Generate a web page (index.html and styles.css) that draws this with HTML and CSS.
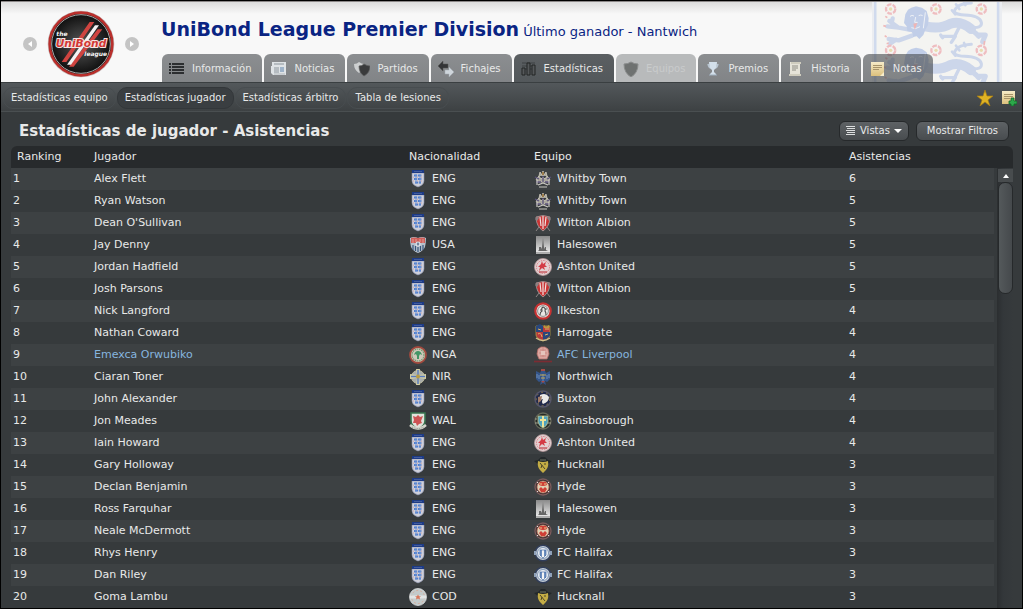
FILE: index.html
```html
<!DOCTYPE html>
<html lang="es">

<head>
    <meta charset="UTF-8">
    <meta name="viewport" content="width=device-width, initial-scale=1.0">
    <title>UniBond League Premier Division</title>
    <link rel="stylesheet" href="styles.css">
</head>

<body>
    <!-- iconos compartidos -->
    <svg class="defs" aria-hidden="true">
        <defs>
            <linearGradient id="paper" x1="0" y1="0" x2="0" y2="1">
                <stop offset="0" stop-color="#f6ebc8" />
                <stop offset="1" stop-color="#dcc07c" />
            </linearGradient>
            <linearGradient id="sky" x1="0" y1="0" x2="0" y2="1">
                <stop offset="0" stop-color="#8a8a8a" />
                <stop offset="1" stop-color="#f2f2f2" />
            </linearGradient>
            <radialGradient id="disc">
                <stop offset="0" stop-color="#585858" />
                <stop offset="1" stop-color="#0c0c0c" />
            </radialGradient>
        </defs>

        <symbol id="eng" viewBox="0 0 18 18">
            <path d="M3 3h12v8q0 4-6 6-6-2-6-6z" fill="#cfd0da" stroke="#8992ad" stroke-width=".6" />
            <path d="M3 0h12v3H3z" fill="#1d3b87" />
            <path d="M5 1.500h8" stroke="#5c73ad" stroke-width=".6" />
            <path d="M5 5.500h8M5 9h8M6 12.500h6" stroke="#4f7ccb" stroke-width="2" stroke-dasharray="3 .8" />
            <path d="M7 4v10M11 4v10" stroke="#7396d6" stroke-width="1" />
            <path d="M4 7.200h10M4 11h10" stroke="#cf9a9c" stroke-width=".8" stroke-dasharray="1 3" />
        </symbol>
        <symbol id="usa" viewBox="0 0 18 18">
            <path d="M1 2q4-2 8 0 4-2 8 0 0 5-1 9-2 4-7 6-5-2-7-6Q1 7 1 2z" fill="#b5bfcb" />
            <path d="M2 2q4-1 7 0 4-1 7 0v5H2z" fill="#cf5f59" />
            <path d="M4 3v4M7 3v3M11 3v3M14 3v4" stroke="#e9b5b0" stroke-width=".7" />
            <path d="M4 9v5M6.500 10v5M9 11v5M11.500 10v5M14 9v5" stroke="#36557b" stroke-width="1.200" />
            <circle cx="9" cy="8" r="2.500" fill="#dfe5eb" />
            <path d="M9 6l1.500 2-1.500 2-1.500-2z" fill="#6f8199" />
        </symbol>
        <symbol id="nga" viewBox="0 0 18 18">
            <circle cx="9" cy="9" r="8" fill="#cfc9bb" stroke="#a34a3e" stroke-width="1.800" />
            <circle cx="9" cy="9" r="6" fill="none" stroke="#75976f" stroke-width="1.200" stroke-dasharray="1.500 .7" />
            <path d="M5 9q1-4 4-4t4 4l-2-1-1 2v3H8v-3L7 8z" fill="#439565" />
        </symbol>
        <symbol id="nir" viewBox="0 0 18 18">
            <circle cx="9" cy="9" r="6.500" fill="#a9adab" stroke="#c5c2a5" stroke-width="1" />
            <path d="M7 1h4l-1 6 7-1v5l-7-1 1 7H7l1-7-7 1V6l7 1z" fill="#d3cfa5" />
            <path d="M9 2v14M2 8.500h14" stroke="#577bc0" stroke-width="1.500" />
            <circle cx="9" cy="8.500" r="2" fill="#b99d43" />
        </symbol>
        <symbol id="wal" viewBox="0 0 18 18">
            <path d="M2 1h14v8q0 5-7 8-7-3-7-8z" fill="#e1e2db" stroke="#39744f" stroke-width="1.600" />
            <path d="M4 4l3 1 2-2 2 2 3-1-2 5 1 2-3 1-2 2-1-3-3 0 1-3z" fill="#cc5353" />
            <path d="M1 13q8 7 16 0" fill="none" stroke="#d6d6ce" stroke-width="2.400" />
            <path d="M3 15q6 3 12 0" fill="none" stroke="#6d7c70" stroke-width=".7" stroke-dasharray="1 .8" />
        </symbol>
        <symbol id="cod" viewBox="0 0 18 18">
            <circle cx="9" cy="9" r="8.500" fill="#c3caca" stroke="#dddddd" stroke-width=".8" />
            <circle cx="9" cy="9" r="6.500" fill="none" stroke="#d9a490" stroke-width=".8" stroke-dasharray="2 2" />
            <path d="M1 9h16" stroke="#e1e5e5" stroke-width="3" />
            <path d="M9 6.500l1 1.700h2l-1.500 1.300.5 2L9 10.500l-2 1 .5-2L6 8.200h2z" fill="#d8775b" />
        </symbol>

        <symbol id="whitby" viewBox="0 0 18 18">
            <path d="M5 6l1-4 2 3 1-4 1 4 2-3 1 4M2 9l3-3 2 3 2-2 2 2 2-3 3 3-2 3H4z" fill="#aaa79d" stroke="#d3cec0" stroke-width=".8" />
            <path d="M1 7l4 2M17 7l-4 2M2 12l5 0M11 12h5M9 6v6" stroke="#5a527b" stroke-width="1.300" />
            <path d="M4 15l5-2 5 2M5 17h8M3 10v5M15 10v5" stroke="#c9c7c2" stroke-width="1.200" fill="none" />
            <path d="M8 2h2v3H8z" fill="#9b7b4a" />
        </symbol>
        <symbol id="witton" viewBox="0 0 18 18">
            <path d="M2 3q7-3 14 0 0 9-7 14Q2 12 2 3z" fill="#c93434" stroke="#aaa2a2" stroke-width=".8" />
            <path d="M6 3l1 9M12 3l-1 9M9 2v13" stroke="#eee0df" stroke-width="1.200" />
            <path d="M2 17L5 13M16 17l-3-4" stroke="#8d8585" stroke-width="1" />
            <path d="M1 5l3-3 1 2-2 3zM17 5l-3-3-1 2 2 3z" fill="#8a8182" />
        </symbol>
        <symbol id="halesowen" viewBox="0 0 18 18">
            <path d="M2 0h14v18H2z" fill="url(#sky)" />
            <path d="M4 15l1-1v-3h2v2l1-2 1-9 1 9 1 2v-2h1v3l2 1z" fill="#666" />
            <path d="M2 17h14" stroke="#999" stroke-width="1.500" />
        </symbol>
        <symbol id="ashton" viewBox="0 0 18 18">
            <circle cx="9" cy="9" r="8.500" fill="#e3d1d2" stroke="#b99a9c" stroke-width=".8" />
            <circle cx="9" cy="9" r="6.500" fill="none" stroke="#d46a70" stroke-width=".8" stroke-dasharray="1.500 1" />
            <path d="M8 3l1 3 3-2-1 3 2 2-3 0 1 3-3-2-3 3 1-4-2 0 3-3z" fill="#d43b45" />
            <path d="M5 14h8" stroke="#c34b53" stroke-width="1.300" />
        </symbol>
        <symbol id="ilkeston" viewBox="0 0 18 18">
            <circle cx="9" cy="9" r="7.700" fill="#e9e6e4" stroke="#c83232" stroke-width="2.200" />
            <circle cx="9" cy="9" r="5.400" fill="none" stroke="#777" stroke-width=".8" />
            <path d="M6 13q0-3 2-4-1-3 1-4 3 1 2 4 1 1 1 4M6 8h2M11 7h2" stroke="#4c4c4c" stroke-width="1.100" fill="none" />
        </symbol>
        <symbol id="harrogate" viewBox="0 0 18 18">
            <path d="M2 2h14v9q0 3-7 6-7-3-7-6z" fill="#b7393c" stroke="#b39c45" stroke-width=".8" />
            <path d="M2 2l4-2 3 2v6H2zM9 8h7v4q-3 3-7 4z" fill="#29477c" />
            <path d="M10 1l2 2 3-2v3h-5z" fill="#b99a3c" />
            <path d="M4 10q3-2 4 3M11 5h4M4 5l3 1M11 11l3-1" stroke="#ddb267" stroke-width="1" fill="none" />
            <path d="M2 14q7 5 14 0" stroke="#d3bf8a" stroke-width="1.300" fill="none" />
        </symbol>
        <symbol id="liverpool" viewBox="0 0 18 18">
            <path d="M4 3l3-2h4l3 2 1 5-2 5H5L3 8z" fill="#dba6a0" stroke="#b76e69" stroke-width=".8" />
            <path d="M6 4h6M5 7h8M6 10h6M9 2v9" stroke="#c98780" stroke-width=".9" />
            <path d="M7 5h4v4H7z" fill="#e5c4bc" />
            <path d="M0 15.500h18" stroke="#7b2c33" stroke-width="1.700" />
        </symbol>
        <symbol id="northwich" viewBox="0 0 18 18">
            <path d="M2 3l4 2 1-2q2-2 4 0l1 2 4-2v8l-3 3-2-1 1 4-3-2-3 2 1-4-2 1-3-3z" fill="#34558a" />
            <path d="M3 6v4M5 7v4M13 7v4M15 6v4M9 6v7" stroke="#7f9cc4" stroke-width=".8" />
            <path d="M7 1h4v2H7zM7 13l2 2 2-2" fill="#a34b46" />
            <path d="M6 7h6M7 10h4" stroke="#c4a850" stroke-width="1" />
        </symbol>
        <symbol id="buxton" viewBox="0 0 18 18">
            <circle cx="9" cy="9" r="8" fill="#20294a" stroke="#55566a" stroke-width="1.500" />
            <circle cx="9" cy="9" r="6.800" fill="none" stroke="#a58c49" stroke-width=".8" stroke-dasharray="2 3" />
            <path d="M6 5q6-3 9 2 0 5-6 7-2-2 0-5l-3 1z" fill="#ebeae8" />
            <path d="M4 7l4-1-1 5-3 2z" fill="#9f7965" />
        </symbol>
        <symbol id="gainsborough" viewBox="0 0 18 18">
            <circle cx="9" cy="9" r="8" fill="#252b28" stroke="#67695a" stroke-width="1.300" />
            <path d="M4 4h10v6q-1 4-5 6-4-2-5-6z" fill="#4fa4c0" stroke="#c9c58a" stroke-width=".8" />
            <path d="M9 4v11M6 8h6" stroke="#ebe39a" stroke-width="2" />
            <path d="M1 7h2M1 11h3M15 7h2M14 11h3" stroke="#a4a490" stroke-width="1" />
        </symbol>
        <symbol id="hucknall" viewBox="0 0 18 18">
            <path d="M0 5l4-1 3-3h4l3 3 4 1-4 3H4z" fill="#23282a" />
            <path d="M4 5q5 2 10 0 1 6-2 9l-3 3-3-3q-3-3-2-9z" fill="#c4ad45" />
            <path d="M6 7l5 6M7 12l1-3M11 7v2" stroke="#4d4729" stroke-width="1" />
            <path d="M6 4h6" stroke="#707460" stroke-width="1" />
        </symbol>
        <symbol id="hyde" viewBox="0 0 18 18">
            <circle cx="9" cy="9" r="8" fill="#363032" stroke="#7d5c5d" stroke-width="1.300" />
            <circle cx="9" cy="9" r="6" fill="#ded1b4" stroke="#bd6a57" stroke-width=".8" />
            <path d="M6 4h6l1 3q-4 2-8 0zM5 11l2-2 2 2 2-2 2 2-2 3H7z" fill="#cf3f35" />
            <path d="M7 5v2M11 5v2" stroke="#e9cb8c" stroke-width="1" />
            <path d="M3 4l1 1M15 4l-1 1M3 14l1-1M15 14l-1-1" stroke="#ddd" stroke-width="1" />
        </symbol>
        <symbol id="halifax" viewBox="0 0 18 18">
            <circle cx="9" cy="9" r="7.800" fill="#c3ccd6" stroke="#303d5a" stroke-width="1.600" />
            <circle cx="9" cy="9" r="5.500" fill="#edf1f4" stroke="#8196b4" stroke-width="1" />
            <path d="M6 6h6v5l-3 3-3-3z" fill="#f5f5f5" stroke="#5e7fb0" stroke-width=".8" />
            <path d="M7 6v6M11 6v6" stroke="#426dac" stroke-width="1.500" />
            <path d="M0 7h2v4H0zM16 7h2v4h-2z" fill="#8fa1b9" />
        </symbol>

        <!-- un león con sus rosas, se repite en vertical -->
        <symbol id="lion" viewBox="0 0 390 124" overflow="visible">
            <g fill="none" stroke="#ccd6ea" stroke-linecap="round" stroke-linejoin="round">
                <path d="M160 76q45 10 75-8 32-10 62 16" stroke-width="30" />
                <path d="M290 86q18 4 30 20M318 102h22l-8 20" stroke-width="15" />
                <path d="M262 78l-14 28-40 0M250 106l-12 18M212 110l-6-8" stroke-width="10" />
                <path d="M112 86L80 80l-28-20M80 80l-34-4M60 62l2-10" stroke-width="13" />
                <path d="M120 104l-40 14-30-4M72 116l-18 12" stroke-width="13" />
                <path d="M292 78q40 6 36-14t-50-22q-42-2-26-20 8-14 46-16" stroke-width="9" />
                <path d="M250 40l-10-12M262 24l-10-14M280 12l-4-10" stroke-width="8" />
            </g>
            <path d="M100 40l8-14 10-6 14-4 18 4 14 10 6 22-2 20-8 14-6 16-12 12-8-8-10 2-4-14-14-4-2-14-8-10z" fill="#c1cee8" />
            <path d="M114 46q6-5 12-1M140 44q7-4 12 0M131 48l-3 16 9 0M118 80q12 7 26-3M160 34l-6 48" fill="none" stroke="#eef1f6" stroke-width="3" />
            <path d="M124 68l12-2-8 20z" fill="#f0b5b4" />
            <path d="M40 46l6 4M34 74l8 2M38 104l6 4M44 128l6-2M338 120l-2 12" stroke="#efb9b9" stroke-width="5" />
            <g fill="none" stroke="#efbdc0" stroke-width="7">
                <circle cx="56" cy="24" r="14" stroke-dasharray="14 3.600" />
                <circle cx="192" cy="24" r="14" stroke-dasharray="14 3.600" />
                <circle cx="328" cy="24" r="14" stroke-dasharray="14 3.600" />
            </g>
            <g fill="#e9ddb0">
                <circle cx="56" cy="24" r="5" />
                <circle cx="192" cy="24" r="5" />
                <circle cx="328" cy="24" r="5" />
            </g>
        </symbol>
    </svg>

    <div class="window">
        <header class="top">
            <svg class="crest" viewBox="0 0 390 243" aria-hidden="true">
                <path d="M0 0h390v243H0z" fill="#ebedf1" />
                <path d="M6 0h7v243H6zM375 0h7v243h-7z" fill="#d0daed" />
                <path d="M15 0h358v243H15z" fill="#f4f4f1" />
                <use href="#lion" width="390" height="124" y="-3" />
                <use href="#lion" width="390" height="124" y="121" />
            </svg>

            <div class="club">
                <button class="arrow" aria-label="Anterior">
                    <svg viewBox="0 0 14 14"><path d="M9 4v6L5 7z" fill="#fff" /></svg>
                </button>
                <svg class="logo" viewBox="0 0 204 204" role="img" aria-label="The UniBond League">
                    <circle cx="102" cy="102" r="100" fill="#c9c4c4" />
                    <circle cx="102" cy="102" r="94" fill="url(#disc)" stroke="#b92f2c" stroke-width="8" />
                    <circle cx="102" cy="102" r="88" fill="none" stroke="#a9a9a9" stroke-width="3" />
                    <path d="M128 36h14L58 156H44zM152 58h14L80 170H66z" fill="#d04440" />
                    <path d="M144 46h12L72 164H60z" fill="#f4f4f4" />
                    <text x="28" y="77" class="logo-small">the</text>
                    <text x="102" y="112" class="logo-big">UniBond</text>
                    <text x="112" y="138" class="logo-small">league</text>
                </svg>
                <button class="arrow" aria-label="Siguiente">
                    <svg viewBox="0 0 14 14"><path d="M5 4v6l4-3z" fill="#fff" /></svg>
                </button>
            </div>

            <div class="heading">
                <div class="titles">
                    <h1>UniBond League Premier Division</h1>
                    <p>Último ganador - Nantwich</p>
                </div>
                <nav class="tabs">
                    <a href="#">
                        <svg viewBox="0 0 16 16"><path d="M0 2h2v2H0zM0 5h2v2H0zM0 8h2v2H0zM0 11h2v2H0zM3 2h12v2H3zM3 5h12v2H3zM3 8h12v2H3zM3 11h12v2H3z" fill="#2c2e30" /></svg>
                        Información
                    </a>
                    <a href="#">
                        <svg viewBox="0 0 16 16"><path d="M1 1h14v13H2l-2-2V5h1z" fill="#dfe3e6" /><path d="M3 3h10M3 7h5M3 9h5M3 11h5" stroke="#8b949b" /><path d="M9 6h4v5H9z" fill="#9eb3c9" /><path d="M3 13h11" stroke="#b5babd" /></svg>
                        Noticias
                    </a>
                    <a href="#">
                        <svg viewBox="0 0 16 16"><path d="M0 3q3 0 5-2 3 2 5 2 0 6-5 9Q0 9 0 3z" fill="#cdcfd0" /><path d="M5 5q3 0 5-2 3 2 6 2 0 7-6 10Q5 12 5 5z" fill="#3a3b3c" stroke="#5d5e5f" stroke-width=".7" /></svg>
                        Partidos
                    </a>
                    <a href="#">
                        <svg viewBox="0 0 16 16"><path d="M0 5l5-5v3h5v4H5v3z" fill="#333436" stroke="#555" stroke-width=".5" /><path d="M16 11l-5-5v3H7v4h4v3z" fill="#cfd6dc" stroke="#a3abb1" stroke-width=".5" /></svg>
                        Fichajes
                    </a>
                    <a href="#" class="active">
                        <svg viewBox="0 0 16 16"><path d="M1 2h13M1 5h13M1 8h13" stroke="#3d4043" /><path d="M1 7h3v7H1zM6 2h3v12H6zM11 4h3v10h-3z" fill="#55585a" stroke="#222425" /></svg>
                        Estadísticas
                    </a>
                    <a href="#" class="disabled" aria-disabled="true">
                        <svg viewBox="0 0 16 16"><path d="M1 3q4 0 7-2 3 2 7 2 0 9-7 13Q1 12 1 3z" fill="#6f7271" stroke="#8a8c8c" /></svg>
                        Equipos
                    </a>
                    <a href="#">
                        <svg viewBox="0 0 16 16"><path d="M3 3q1 4 3 4M13 3q-1 4-3 4" fill="none" stroke="#b9c6d2" stroke-width="1.500" /><path d="M4 1h8q0 6-3 8v2l2 2v1H5v-1l2-2V9Q4 7 4 1z" fill="#d3dfea" /><path d="M4 14h8" stroke="#9fb0bf" /></svg>
                        Premios
                    </a>
                    <a href="#">
                        <svg viewBox="0 0 16 16"><path d="M2 1h11v2h-1v10h1v2H1v-2h1z" fill="#e5e3d8" /><path d="M4 5h6M4 7h6M4 9h4" stroke="#8e8d84" /><path d="M1 14h12M3 2h10" stroke="#b9b6a4" /></svg>
                        Historia
                    </a>
                    <a href="#">
                        <svg viewBox="0 0 16 16"><path d="M1 1h13v14H1z" fill="url(#paper)" /><path d="M3 4.500h9M3 6.500h9M3 8.500h6" stroke="#a8946a" /><path d="M14 15v-4l-4 4z" fill="#f8edcc" /></svg>
                        Notas
                    </a>
                </nav>
            </div>
        </header>

        <div class="subnav">
            <nav class="pills">
                <a href="#">Estadísticas equipo</a>
                <a href="#" class="active">Estadísticas jugador</a>
                <a href="#">Estadísticas árbitro</a>
                <a href="#">Tabla de lesiones</a>
            </nav>
            <button class="tool" aria-label="Favorito">
                <svg viewBox="0 0 16 16"><path d="M8 0l2 6h6l-5 4 2 6-5-4-5 4 2-6-5-4h6z" fill="#e0b323" stroke="#a87d12" stroke-width=".7" /></svg>
            </button>
            <button class="tool" aria-label="Añadir nota">
                <svg viewBox="0 0 16 16"><path d="M1 1h13v13H1z" fill="url(#paper)" /><path d="M3 4.500h9M3 6.500h9M3 8.500h6" stroke="#a8946a" /><path d="M10 8h3v3h3v3h-3v2h-3v-2H8v-3h2z" fill="#2ca84a" stroke="#11642a" stroke-width=".8" /></svg>
            </button>
        </div>

        <main>
            <div class="bar">
                <h2>Estadísticas de jugador - Asistencias</h2>
                <button class="btn">
                    <svg class="lines" viewBox="0 0 10 10"><path d="M0 .500h9M1 2.500h8M0 4.500h9M1 6.500h8M0 8.500h9" stroke="#dcdedf" /></svg>
                    Vistas
                    <svg class="caret" viewBox="0 0 8 4"><path d="M0 0h8L4 4z" fill="#fff" /></svg>
                </button>
                <button class="btn">Mostrar Filtros</button>
            </div>

            <div class="list">
                <table>
                    <colgroup>
                        <col class="c-rank">
                        <col>
                        <col class="c-nat">
                        <col>
                        <col class="c-num">
                    </colgroup>
                    <thead>
                        <tr><th>Ranking</th><th>Jugador</th><th>Nacionalidad</th><th>Equipo</th><th>Asistencias</th></tr>
                    </thead>
                    <tbody>
                        <tr><td>1</td><td>Alex Flett</td><td><svg><use href="#eng" /></svg>ENG</td><td><svg><use href="#whitby" /></svg>Whitby Town</td><td>6</td></tr>
                        <tr><td>2</td><td>Ryan Watson</td><td><svg><use href="#eng" /></svg>ENG</td><td><svg><use href="#whitby" /></svg>Whitby Town</td><td>5</td></tr>
                        <tr><td>3</td><td>Dean O'Sullivan</td><td><svg><use href="#eng" /></svg>ENG</td><td><svg><use href="#witton" /></svg>Witton Albion</td><td>5</td></tr>
                        <tr><td>4</td><td>Jay Denny</td><td><svg><use href="#usa" /></svg>USA</td><td><svg><use href="#halesowen" /></svg>Halesowen</td><td>5</td></tr>
                        <tr><td>5</td><td>Jordan Hadfield</td><td><svg><use href="#eng" /></svg>ENG</td><td><svg><use href="#ashton" /></svg>Ashton United</td><td>5</td></tr>
                        <tr><td>6</td><td>Josh Parsons</td><td><svg><use href="#eng" /></svg>ENG</td><td><svg><use href="#witton" /></svg>Witton Albion</td><td>5</td></tr>
                        <tr><td>7</td><td>Nick Langford</td><td><svg><use href="#eng" /></svg>ENG</td><td><svg><use href="#ilkeston" /></svg>Ilkeston</td><td>4</td></tr>
                        <tr><td>8</td><td>Nathan Coward</td><td><svg><use href="#eng" /></svg>ENG</td><td><svg><use href="#harrogate" /></svg>Harrogate</td><td>4</td></tr>
                        <tr><td>9</td><td class="own">Emexca Orwubiko</td><td><svg><use href="#nga" /></svg>NGA</td><td class="own"><svg><use href="#liverpool" /></svg>AFC Liverpool</td><td>4</td></tr>
                        <tr><td>10</td><td>Ciaran Toner</td><td><svg><use href="#nir" /></svg>NIR</td><td><svg><use href="#northwich" /></svg>Northwich</td><td>4</td></tr>
                        <tr><td>11</td><td>John Alexander</td><td><svg><use href="#eng" /></svg>ENG</td><td><svg><use href="#buxton" /></svg>Buxton</td><td>4</td></tr>
                        <tr><td>12</td><td>Jon Meades</td><td><svg><use href="#wal" /></svg>WAL</td><td><svg><use href="#gainsborough" /></svg>Gainsborough</td><td>4</td></tr>
                        <tr><td>13</td><td>Iain Howard</td><td><svg><use href="#eng" /></svg>ENG</td><td><svg><use href="#ashton" /></svg>Ashton United</td><td>4</td></tr>
                        <tr><td>14</td><td>Gary Holloway</td><td><svg><use href="#eng" /></svg>ENG</td><td><svg><use href="#hucknall" /></svg>Hucknall</td><td>3</td></tr>
                        <tr><td>15</td><td>Declan Benjamin</td><td><svg><use href="#eng" /></svg>ENG</td><td><svg><use href="#hyde" /></svg>Hyde</td><td>3</td></tr>
                        <tr><td>16</td><td>Ross Farquhar</td><td><svg><use href="#eng" /></svg>ENG</td><td><svg><use href="#halesowen" /></svg>Halesowen</td><td>3</td></tr>
                        <tr><td>17</td><td>Neale McDermott</td><td><svg><use href="#eng" /></svg>ENG</td><td><svg><use href="#hyde" /></svg>Hyde</td><td>3</td></tr>
                        <tr><td>18</td><td>Rhys Henry</td><td><svg><use href="#eng" /></svg>ENG</td><td><svg><use href="#halifax" /></svg>FC Halifax</td><td>3</td></tr>
                        <tr><td>19</td><td>Dan Riley</td><td><svg><use href="#eng" /></svg>ENG</td><td><svg><use href="#halifax" /></svg>FC Halifax</td><td>3</td></tr>
                        <tr><td>20</td><td>Goma Lambu</td><td><svg><use href="#cod" /></svg>COD</td><td><svg><use href="#hucknall" /></svg>Hucknall</td><td>3</td></tr>
                    </tbody>
                </table>
                <div class="scroll">
                    <div class="scroll-head"></div>
                    <div class="track">
                        <button class="up" aria-label="Subir">
                            <svg viewBox="0 0 6 4"><path d="M0 4h6L3 0z" fill="#fff" /></svg>
                        </button>
                        <div class="thumb"></div>
                    </div>
                </div>
            </div>
        </main>
    </div>
</body>

</html>
```
FILE: styles.css
```css
* {
    box-sizing: border-box;
}

body {
    margin: 0;
    background: #000;
    color: #e8e9e9;
    font-family: "DejaVu Sans", Verdana, sans-serif;
    font-size: 11px;
    line-height: 14px;
}

h1, h2, p {
    margin: 0;
}

a {
    color: inherit;
    text-decoration: none;
}

button {
    padding: 0;
    border: 0;
    background: none;
    color: inherit;
    font: inherit;
    cursor: pointer;
}

svg {
    display: block;
    flex: none;
}

.defs {
    position: absolute;
    width: 0;
    height: 0;
}

.window {
    display: flex;
    flex-direction: column;
    min-height: 100vh;
    border: 1px solid #000;
    background: #363a3c;
}

/* cabecera */
.top {
    position: relative;
    display: flex;
    height: 81px;
    overflow: hidden;
    border-top: 1px solid #8c8888;
    background: linear-gradient(#dcdcdc, #f8f8f8 12px);
}

.crest {
    position: absolute;
    top: 0;
    right: 20px;
    width: 130px;
    height: 81px;
}

.club {
    display: flex;
    align-items: center;
    gap: 10px;
    width: 160px;
    padding: 3px 0 0 22px;
}

.arrow {
    width: 14px;
    height: 14px;
    border-radius: 50%;
    background: #c4c4c4;
}

.logo {
    width: 68px;
    height: 68px;
}

.logo-small {
    fill: #f4f4f4;
    font-size: 18px;
    font-style: italic;
    font-weight: bold;
}

.logo-big {
    fill: #d33733;
    stroke: #f6e5e4;
    stroke-width: 6px;
    paint-order: stroke;
    font-size: 32px;
    font-style: italic;
    font-weight: bold;
    text-anchor: middle;
}

.heading {
    position: relative;
    display: flex;
    flex-direction: column;
    justify-content: space-between;
    padding-top: 14px;
}

.titles {
    display: flex;
    align-items: baseline;
    gap: 4px;
    color: #0a2483;
}

h1 {
    font-size: 19px;
    line-height: 26px;
}

.titles p {
    font-size: 13px;
}

.tabs {
    display: flex;
    gap: 2px;
    padding-left: 1px;
}

.tabs a {
    display: flex;
    align-items: center;
    gap: 7px;
    height: 28px;
    padding: 2px 11px 0 7px;
    border-radius: 6px 6px 0 0;
    background: linear-gradient(rgba(73, 77, 81, .62), rgba(73, 77, 81, .68));
    font-size: 10px;
}

.tabs svg {
    width: 16px;
    height: 16px;
}

.tabs .active {
    background: linear-gradient(#5b5f62, #53585b);
}

.tabs .disabled {
    background: rgba(73, 77, 81, .36);
    color: #c9cbcc;
}

/* submenu */
.subnav {
    display: flex;
    align-items: center;
    gap: 8px;
    height: 30px;
    padding: 2px 5px 0 2px;
    border-top: 1px solid #3a3f41;
    border-bottom: 1px solid #4a4f51;
    background: linear-gradient(#53585b, #3d4143);
}

.pills {
    display: flex;
    flex: 1;
    gap: 1px;
}

.pills a {
    padding: 3px 7px;
    border: 1px solid #484d50;
    border-radius: 10px;
    font-size: 10px;
}

.pills .active {
    border-color: #33373a;
    background: #3a3e41;
}

.tool svg {
    width: 16px;
    height: 16px;
}

/* contenido */
main {
    flex: 1;
    padding: 0 9px 0 10px;
}

.bar {
    display: flex;
    align-items: center;
    gap: 7px;
    height: 34px;
    padding: 4px 4px 0 8px;
}

h2 {
    flex: 1;
    font-size: 15px;
    line-height: 20px;
}

.btn {
    display: flex;
    align-items: center;
    gap: 4px;
    height: 20px;
    padding: 0 6px;
    border: 1px solid #26292b;
    border-radius: 6px;
    background: linear-gradient(#5e6265, #484c4f);
    font-size: 10px;
}

.btn:last-child {
    padding: 0 10px;
}

.lines {
    width: 10px;
    height: 10px;
}

.caret {
    width: 8px;
    height: 4px;
}

.list {
    display: flex;
    gap: 3px;
    overflow: hidden;
    border-radius: 6px 6px 0 0;
    background: linear-gradient(#272a2c 22px, transparent 22px);
}

table {
    flex: 1;
    width: 100%;
    table-layout: fixed;
    border-collapse: collapse;
}

.c-rank {
    width: 83px;
}

.c-nat {
    width: 125px;
}

.c-num {
    width: 145px;
}

th, td {
    height: 22px;
    padding: 0;
    text-align: left;
    font-weight: normal;
    white-space: nowrap;
}

th:first-child {
    padding-left: 6px;
}

td:first-child {
    padding-left: 2px;
}

tbody tr:nth-child(odd) {
    background: #3d4143;
}

td svg {
    display: inline-block;
    width: 18px;
    height: 18px;
    margin-right: 5px;
    vertical-align: middle;
}

.own {
    color: #86b5df;
}

.scroll {
    display: flex;
    flex: none;
    flex-direction: column;
    width: 16px;
}

.scroll-head {
    height: 22px;
}

.track {
    flex: 1;
    padding: 1px 0 0 1px;
    background: linear-gradient(90deg, #2b2e30, #33373a 6px, #363a3c);
}

.up {
    display: flex;
    align-items: center;
    justify-content: center;
    width: 15px;
    height: 13px;
    background: #484c4e;
}

.up svg {
    width: 6px;
    height: 4px;
}

.thumb {
    height: 112px;
    border: 1px solid #26292b;
    border-radius: 7px;
    background: linear-gradient(90deg, #54595b, #45494c);
}
```
